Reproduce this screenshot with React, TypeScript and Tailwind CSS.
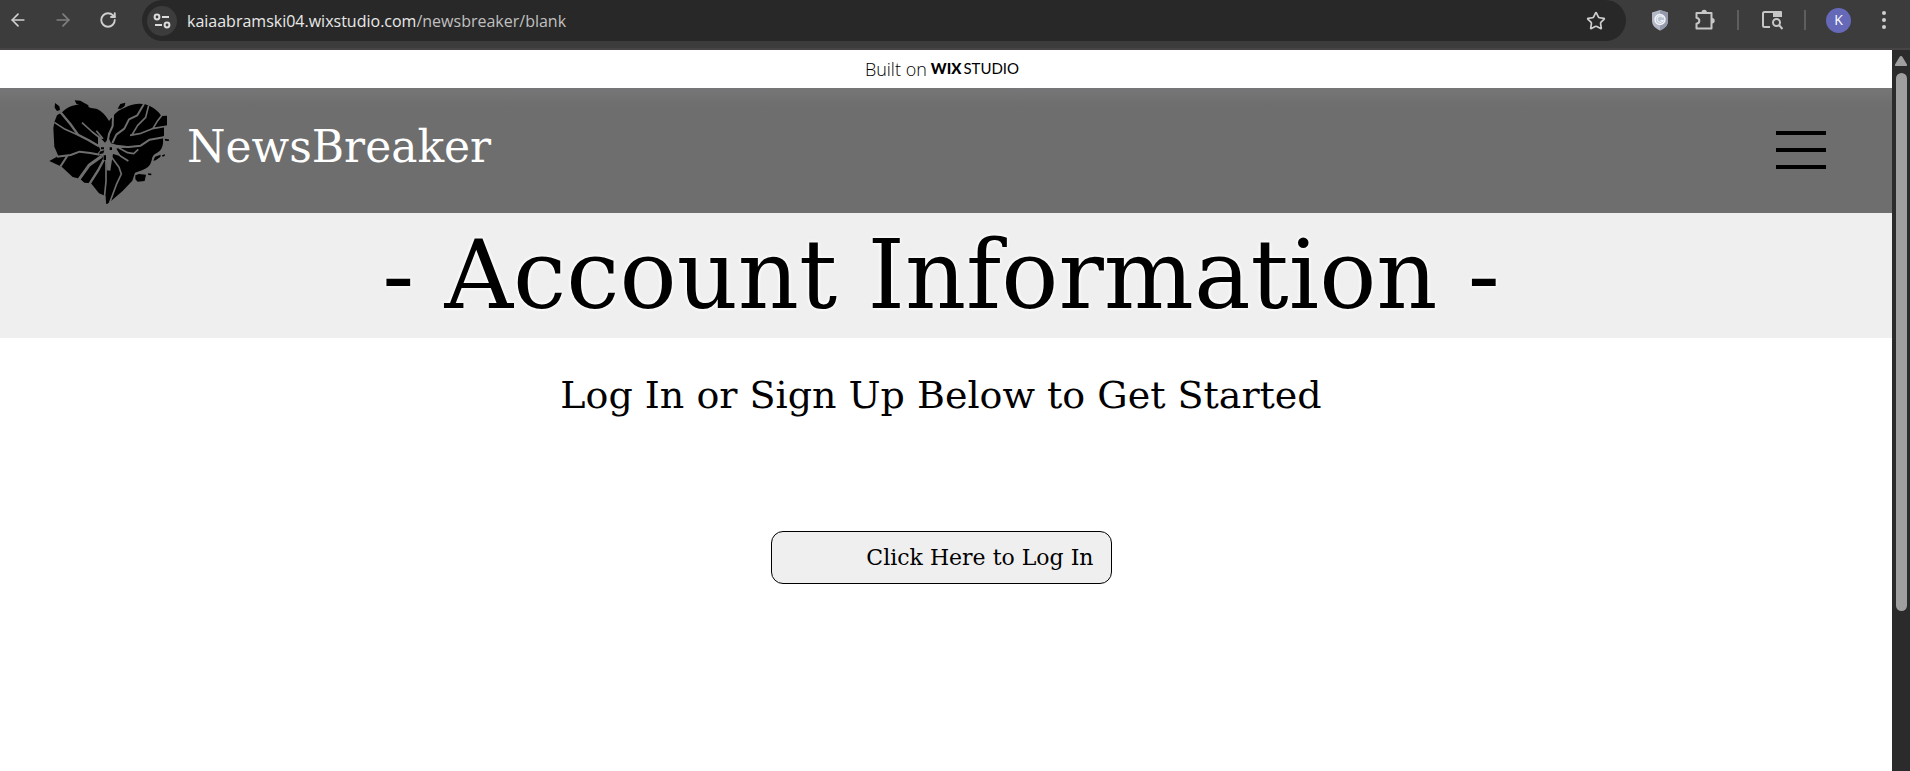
import React from 'react';
import { ArrowLeft, ArrowRight, RotateCw, Star } from 'lucide-react';

const slab = "font-['DejaVu_Serif',serif]";

const SiteInfoIcon = () => (
  <svg width="18" height="18" viewBox="0 0 18 18" fill="none" stroke="#dcdcdc" strokeWidth="2">
    <circle cx="4" cy="5" r="2.4" />
    <path d="M9 5h7M2 13h7" />
    <circle cx="14" cy="13" r="2.4" />
  </svg>
);

const ShieldIcon = () => (
  <svg width="18" height="22" viewBox="0 0 18 22">
    <path d="M9 1 17 3.5V12c0 4.500-3.500 7.500-8 9.500C4.500 19.500 1 16.500 1 12V3.500Z" fill="#b4b8c6" />
    <path d="M9 1 17 3.500V12c0 4.500-3.500 7.500-8 9.500Z" fill="#9499ab" />
    <circle cx="9" cy="10.500" r="5" fill="#b9c3d2" stroke="#f1f3f6" strokeWidth="1.500" />
    <path d="M12 8.500a3.200 3.200 0 1 0 .2 3H9.500" fill="none" stroke="#eef1f5" strokeWidth="1.200" />
  </svg>
);

const PuzzleIcon = () => (
  <svg width="22" height="22" viewBox="0 0 22 22">
    <path
      d="M2.500 4h15v15.500h-15v-4.700c3.800-.8 3.800-5.300 0-6.100Z"
      fill="none"
      stroke="#c7c7c7"
      strokeWidth="2"
      strokeLinejoin="round"
    />
    <path d="M7.500 3.500a2.700 2.700 0 0 1 5.400 0ZM18 9a2.700 2.700 0 0 1 0 5.400Z" fill="#c7c7c7" />
  </svg>
);

const TabSearchIcon = () => (
  <svg width="22" height="20" viewBox="0 0 22 20" fill="none" stroke="#c7c7c7" strokeWidth="2">
    <path d="M9 17H3.500A1.500 1.500 0 0 1 2 15.500v-12A1.500 1.500 0 0 1 3.500 2H20" />
    <path d="M12 1h8a1 1 0 0 1 1 1v5h-9Z" fill="#c7c7c7" stroke="none" />
    <circle cx="15.500" cy="12.500" r="3.500" />
    <path d="m18 15 3.500 4" />
  </svg>
);

const BrokenHeart = () => (
  <svg width="120" height="108" viewBox="60 34 360 324" aria-hidden="true">
    <g fill="#000">
      <path d="M100 82C118 64 140 58 160 61C178 66 186 72 202 72C220 80 232 94 240 109L252 94C262 82 274 74 290 68C312 56 342 54 362 64C378 72 390 82 397 94L414 93L414 123L405 128L405 152L402 160C404 184 398 198 382 206C366 214 372 222 364 238C356 254 334 258 318 264L310 288L280 320L246 349L232 360L229 334L210 326L186 296L166 294L153 282L131 277L98 246L61 229L88 214L76 186L73 130L77 110L84 92Z" />
      <path d="M78 55 91 65 93 76 84 79 77 69ZM137 47 154 48 178 62 179 70 170 69 142 57ZM266 72 274 58 289 54 287 64 276 72ZM407 162 421 165 419 169 409 168ZM373 228 378 216 395 210 394 217 380 227ZM399 212 408 209 407 214 401 216ZM319 272 330 268 351 270 347 289 326 291 319 284ZM357 266 368 267 366 272 358 271Z" />
    </g>
    <g fill="none" stroke="#6e6e6e" strokeWidth="5" strokeLinejoin="round">
      <path strokeWidth="7" d="M92 80 124 118 147 150 178 166 210 185" />
      <path d="M76 113 105 132 147 151M159 114 190 142 217 163M202 138 222 162" />
      <path strokeWidth="6" d="M240 100 252 92 251 124 240 148 235 176" />
      <path strokeWidth="6" d="M345 58 325 92 300 104 286 132 262 150 250 175" />
      <path d="M359 62 350 98 326 122 308 152M303 152 336 146 370 132 416 124M372 131 386 108 400 90" />
      <path strokeWidth="6" d="M246 186 300 187 335 183 362 165 408 157" />
      <path d="M270 190 296 204 314 207 328 194M262 202 274 214 298 229" />
      <path strokeWidth="6" d="M84 216 125 211 152 201 184 205 212 210M116 212 94 246" />
      <path strokeWidth="9" d="M218 215 180 242 150 284" />
      <path strokeWidth="7" d="M226 222 208 256 180 300" />
      <path strokeWidth="5" d="M231 222 231 290 226 340M248 218 270 248 277 268 262 300 242 354" />
      <path fill="#6e6e6e" stroke="none" d="M222 334 229 334 229 364 216 340ZM234 362 246 348 252 352 240 366Z" />
    </g>
    <path
      d="M207 152 228 174 239 160 246 176 262 180 300 185 262 192 276 215 252 208 247 238 244 258 233 257 231 228 218 214 206 206 214 196 207 180Z"
      fill="#6e6e6e"
    />
    <path d="M216 188h9v6h-9ZM242 188h7v8h-7ZM212 201 226 197 223 206 211 209ZM224 212h7v14h-7Z" fill="#000" />
  </svg>
);

const iconButton = 'flex h-10 w-[45px] items-center justify-center';
const navButton = 'flex h-10 w-9 items-center justify-center';

const BrowserBar = () => (
  <div className="flex h-[50px] shrink-0 items-start border-b-2 border-[#464444] bg-[#3c3c3c] font-['Open_Sans',sans-serif]">
    <div className="flex gap-[9px]">
      <button aria-label="Back" className={navButton}>
        <ArrowLeft size={20} color="#cfcfcf" />
      </button>
      <button aria-label="Forward" className={navButton}>
        <ArrowRight size={20} color="#808080" />
      </button>
      <button aria-label="Reload" className={navButton}>
        <RotateCw size={18} color="#cfcfcf" strokeWidth={2.5} />
      </button>
    </div>

    <div className="ml-4 flex h-[41px] flex-1 items-center rounded-full bg-[#282828] pr-[18px] pl-[5px]">
      <button aria-label="Site information" className="flex size-[30px] items-center justify-center rounded-full bg-[#3c3c3c]">
        <SiteInfoIcon />
      </button>
      <p className="ml-[10px] flex-1 text-base text-[#c0c0c0]">
        <span className="text-[#e8e8e8]">kaiaabramski04.wixstudio.com</span>/newsbreaker/blank
      </p>
      <button aria-label="Bookmark" className="flex size-6 items-center justify-center">
        <Star size={20} color="#cfcfcf" />
      </button>
    </div>

    <div className="mr-1 ml-[11px] flex items-center">
      <button aria-label="Shield" className={iconButton}>
        <ShieldIcon />
      </button>
      <button aria-label="Extensions" className={iconButton}>
        <PuzzleIcon />
      </button>
      <span className="mx-[10px] h-5 w-0.5 bg-[#5e5e5e]" />
      <button aria-label="Search tabs" className={iconButton}>
        <TabSearchIcon />
      </button>
      <span className="mx-[10px] h-5 w-0.5 bg-[#5e5e5e]" />
      <button aria-label="Profile" className={iconButton}>
        <span className="flex size-[25px] items-center justify-center rounded-full bg-[#6569b8] text-sm text-white">K</span>
      </button>
      <button aria-label="Menu" className={iconButton}>
        <svg width="4" height="18" viewBox="0 0 4 18" fill="#cfcfcf">
          <circle cx="2" cy="2" r="2" />
          <circle cx="2" cy="9" r="2" />
          <circle cx="2" cy="16" r="2" />
        </svg>
      </button>
    </div>
  </div>
);

const Scrollbar = () => (
  <div className="flex w-[18px] shrink-0 flex-col items-center bg-[#2b2b2b] pt-[6px]">
    <svg width="12" height="10" viewBox="0 0 12 10" fill="#9f9f9f">
      <path d="M6 0q1 0 1.500 1L12 8.500q.3 1.500-1 1.500H1q-1.300 0-1-1.500L4.500 1Q5 0 6 0Z" />
    </svg>
    <div className="mt-[7px] h-[538px] w-[11px] rounded-full bg-[#9f9f9f]" />
  </div>
);

const App = () => {
  return (
    <div className="flex min-h-screen flex-col bg-white">
      <BrowserBar />

      <div className="flex flex-1">
        <div className="flex-1">
          <a
            href="#studio"
            className="flex h-[38px] items-center justify-center gap-1 pr-2 pb-px font-['Open_Sans',sans-serif] text-lg font-light text-black"
          >
            Built on
            <span className="flex items-center gap-0.5 font-[Lato,sans-serif] text-[15px]">
              <span className="font-black">WIX</span>
              <span className="font-normal">STUDIO</span>
            </span>
          </a>

          <header className="flex h-[125px] items-center justify-between bg-linear-to-b from-[#767678] to-[#6e6e6e] to-15% pr-[66px] pb-[2px] pl-[49px]">
            <a href="#home" className="flex items-center gap-[18px]">
              <BrokenHeart />
              <span className={`${slab} pb-[6px] text-[44px] leading-none text-white`}>NewsBreaker</span>
            </a>
            <button aria-label="Open menu" className="flex w-[50px] flex-col gap-[13px]">
              <span className="h-1 bg-black" />
              <span className="h-1 bg-black" />
              <span className="h-1 bg-black" />
            </button>
          </header>

          <main className="flex flex-col items-center pr-[10px]">
            <div className="-mr-[10px] flex h-[125px] items-center justify-center self-stretch bg-[#efefef] pr-[10px]">
              <h1 className={`${slab} text-[95px] leading-none whitespace-nowrap text-black [text-shadow:0_0_4px_#fff,0_0_4px_#fff]`}>
                - Account Information -
              </h1>
            </div>
            <h2 className={`${slab} mt-[33px] text-[38px] leading-[48px] text-black`}>
              Log In or Sign Up Below to Get Started
            </h2>
            <button
              className={`${slab} mt-28 flex h-[53px] w-[341px] items-center justify-end rounded-xl border border-black bg-[#efefef] pr-[17px] text-[22px] text-black`}
            >
              Click Here to Log In
            </button>
          </main>
        </div>

        <Scrollbar />
      </div>
    </div>
  );
};

export default App;
